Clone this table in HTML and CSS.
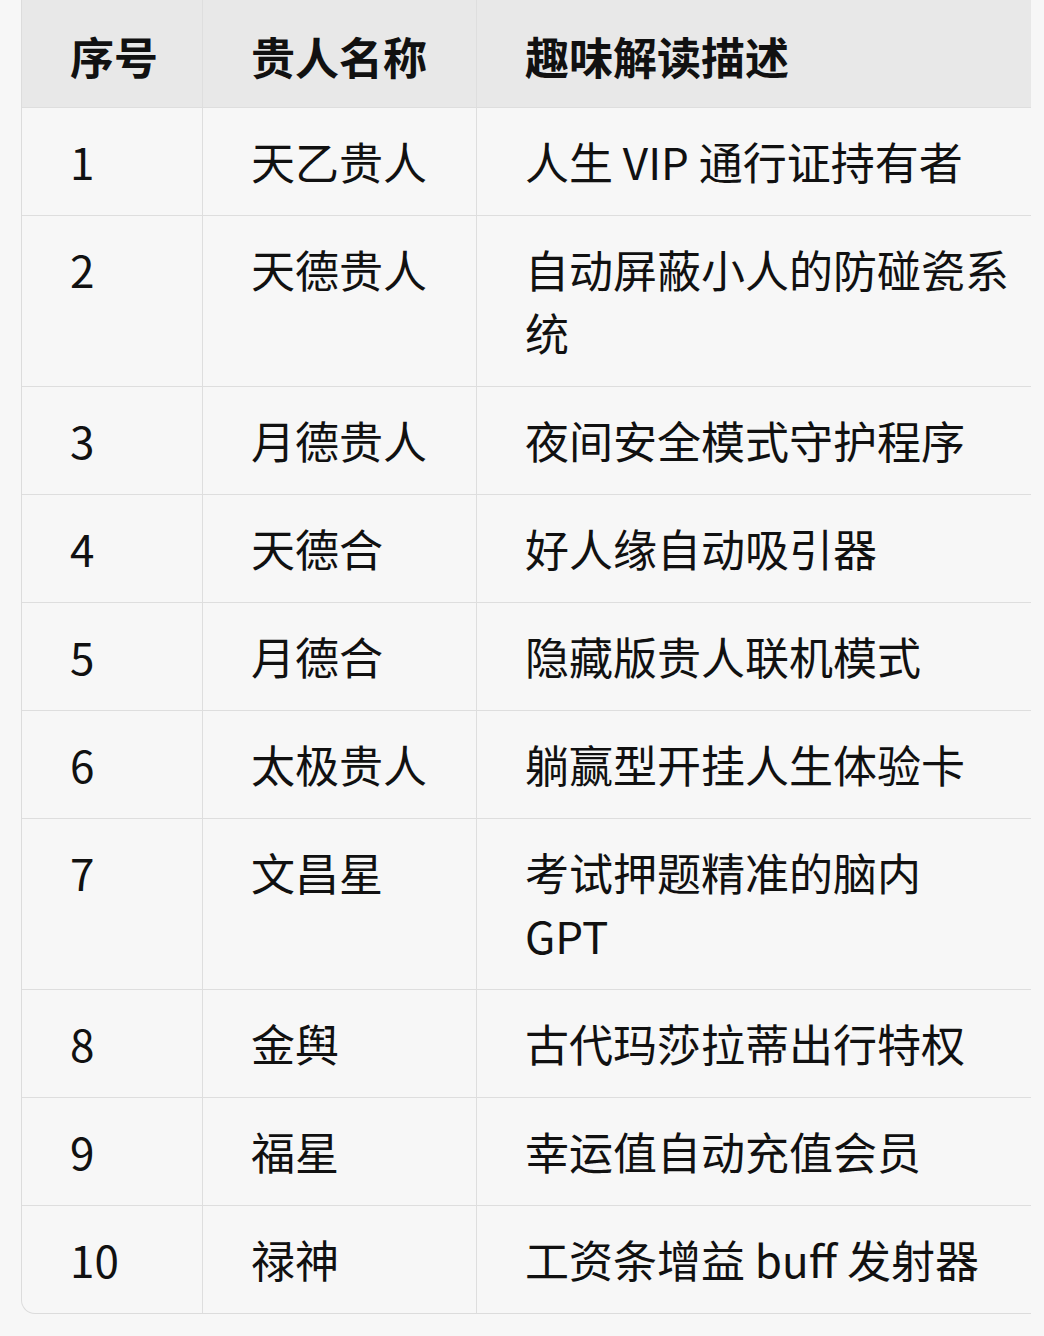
FILE: index.html
```html
<!DOCTYPE html>
<html lang="zh-CN">
<head>
<meta charset="utf-8">
<link rel="stylesheet" href="styles.css">
</head>
<body>
<div class="wrap">
  <table class="grid">
    <colgroup>
      <col class="c1">
      <col class="c2">
      <col class="c3">
    </colgroup>
    <thead>
      <tr><th>序号</th><th>贵人名称</th><th>趣味解读描述</th></tr>
    </thead>
    <tbody>
      <tr><td>1</td><td>天乙贵人</td><td>人生 VIP 通行证持有者</td></tr>
      <tr><td>2</td><td>天德贵人</td><td>自动屏蔽小人的防碰瓷系统</td></tr>
      <tr><td>3</td><td>月德贵人</td><td>夜间安全模式守护程序</td></tr>
      <tr><td>4</td><td>天德合</td><td>好人缘自动吸引器</td></tr>
      <tr><td>5</td><td>月德合</td><td>隐藏版贵人联机模式</td></tr>
      <tr><td>6</td><td>太极贵人</td><td>躺赢型开挂人生体验卡</td></tr>
      <tr><td>7</td><td>文昌星</td><td>考试押题精准的脑内 GPT</td></tr>
      <tr><td>8</td><td>金舆</td><td>古代玛莎拉蒂出行特权</td></tr>
      <tr><td>9</td><td>福星</td><td>幸运值自动充值会员</td></tr>
      <tr><td>10</td><td>禄神</td><td>工资条增益 buff 发射器</td></tr>
    </tbody>
  </table>
</div>
</body>
</html>
```
FILE: styles.css
```css
html, body {
  margin: 0;
  padding: 0;
  background: #f7f7f7;
}
body {
  font-family: "Noto Sans CJK SC", "Noto Sans", sans-serif;
  color: #111;
}
.wrap {
  margin-left: 21px;
  width: 1010px;
  overflow: hidden;
  border-left: 1px solid #dcdcdc;
  border-bottom: 1px solid #dcdcdc;
  border-bottom-left-radius: 14px;
  box-sizing: border-box;
}
.grid {
  border-collapse: separate;
  border-spacing: 0;
  table-layout: fixed;
  width: 1038px;
}
.c1 { width: 181px; }
.c2 { width: 274px; }
.c3 { width: 583px; }
.grid th,
.grid td {
  font-size: 44px;
  line-height: 63px;
  padding: 22px 48px 22px 48px;
  text-align: left;
  vertical-align: top;
  border-right: 1px solid #dedede;
  border-bottom: 1px solid #dedede;
}
.grid th {
  background: #e8e8e8;
  font-weight: 700;
  white-space: nowrap;
  padding-top: 25px;
  padding-bottom: 19px;
}
.grid td {
  font-weight: 400;
}
.grid tbody tr:last-child td {
  border-bottom: none;
}
```
